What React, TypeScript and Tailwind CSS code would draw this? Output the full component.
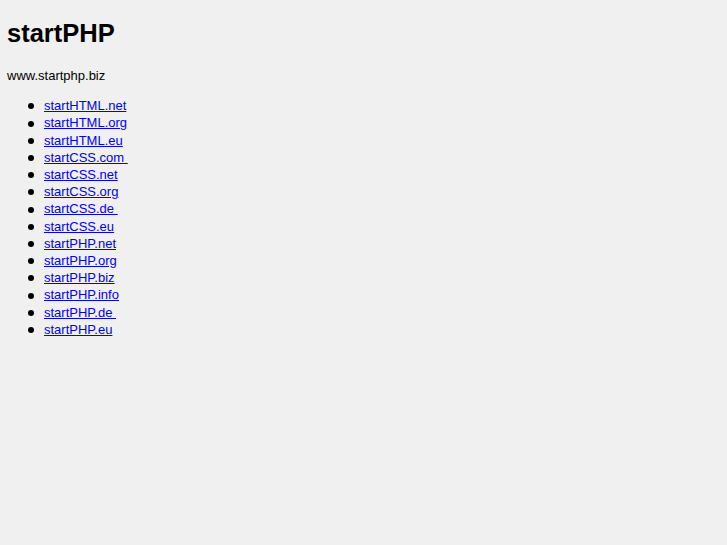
const links = [
  "startHTML.net",
  "startHTML.org",
  "startHTML.eu",
  "startCSS.com ",
  "startCSS.net",
  "startCSS.org",
  "startCSS.de ",
  "startCSS.eu",
  "startPHP.net",
  "startPHP.org",
  "startPHP.biz",
  "startPHP.info",
  "startPHP.de ",
  "startPHP.eu",
];

export default function App() {
  return (
    <div className="min-h-screen bg-[#f0f0f0] px-[7px] pt-[18px] font-['Liberation_Sans',Arial,sans-serif] text-[13px] leading-[17.2px] text-black">
      <h1 className="text-[25.5px] font-bold leading-[30px]">startPHP</h1>
      <p className="mt-[19px]">www.startphp.biz</p>
      <ul className="mt-[13px] pl-[21px]">
        {links.map((l) => (
          <li key={l} className="flex items-center">
            <span className="mr-[10px] mt-[1px] h-[6px] w-[6px] rounded-full bg-black" />
            <a href="#" className="whitespace-pre text-[#0000ee] underline">
              {l}
            </a>
          </li>
        ))}
      </ul>
    </div>
  );
}
